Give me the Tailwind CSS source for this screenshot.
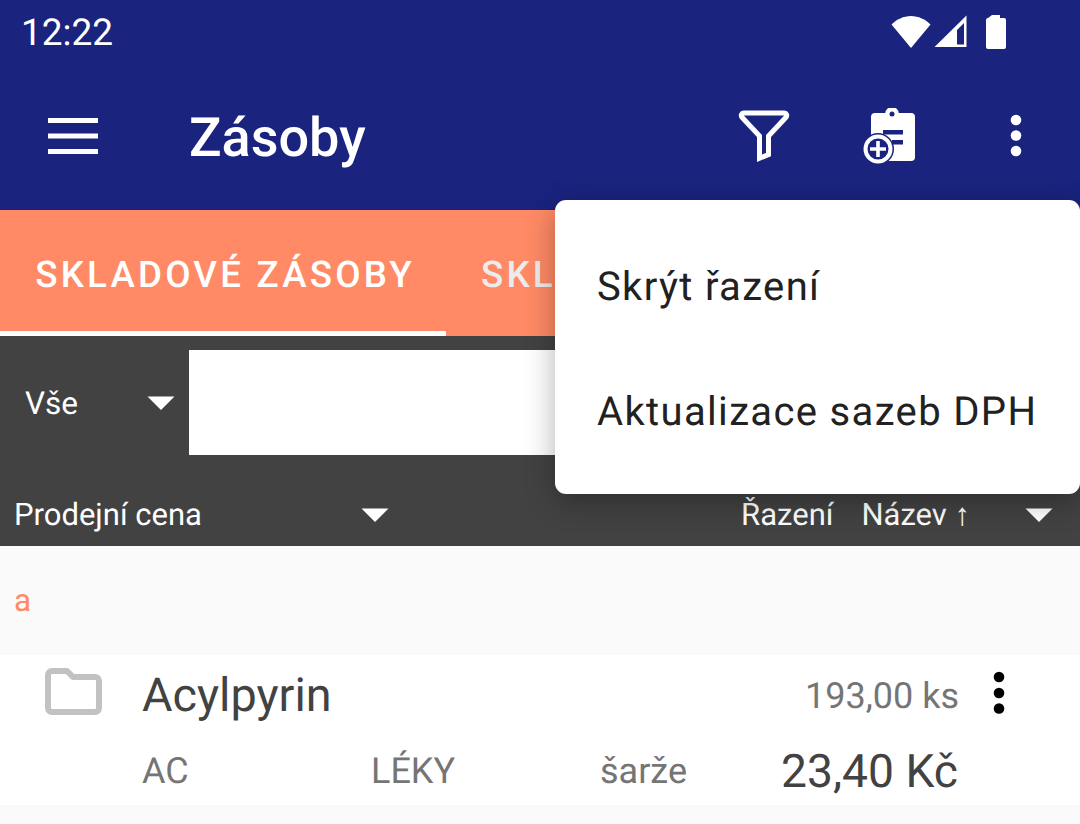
<!DOCTYPE html>
<html lang="cs">
<head>
  <meta charset="UTF-8">
  <meta name="viewport" content="width=device-width, initial-scale=1.0">
  <title>Zásoby</title>
  <script src="https://cdn.jsdelivr.net/npm/@tailwindcss/browser@4"></script>
</head>
<body class="relative w-[1080px] h-[824px] overflow-hidden bg-[#fafafa] font-['Roboto',sans-serif] [text-rendering:geometricPrecision]">

  <!-- Status bar + toolbar -->
  <header class="h-[210px] bg-[#1a237e] text-white">
    <div class="h-[66px] flex items-center justify-between pl-[21px] pr-[74px]">
      <span class="text-[37px] leading-none pt-[1px]">12:22</span>
      <div class="flex items-center pb-[3px]">
        <svg class="w-[40px] h-[34px]" viewBox="0 0 40 34" fill="#fff"><path d="M0.5 9.5C5.5 4.5 12.500 1 20 1s14.500 3.500 19.500 8.500L20 33z"/></svg>
        <svg class="ml-[3px] w-[33px] h-[33px]" viewBox="0 0 33 33" fill="#fff"><path fill-rule="evenodd" d="M32.500 0.500V32H0.500zM30 8l-7 7v14.500h7z"/></svg>
        <svg class="ml-[19px] w-[20px] h-[34px]" viewBox="0 0 20 34" fill="#fff"><path d="M6 0h8v3h4a2 2 0 0 1 2 2v27a2 2 0 0 1-2 2H2a2 2 0 0 1-2-2V5a2 2 0 0 1 2-2z"/></svg>
      </div>
    </div>
    <div class="h-[144px] flex items-center pb-[4px]">
      <svg class="ml-[48px] w-[50px] h-[36px] shrink-0" viewBox="0 0 50 36" fill="#fff"><rect y="0" width="50" height="5"/><rect y="15.500" width="50" height="5"/><rect y="31" width="50" height="5"/></svg>
      <h1 class="ml-[91px] pt-[6px] text-[54px] leading-none font-medium">Zásoby</h1>
      <svg class="ml-auto w-[52px] h-[52px] shrink-0" viewBox="0 0 52 52" fill="none" stroke="#fff" stroke-width="5"><path d="M6 3h40c2.500 0 3.500 2.500 2 4.300L30.500 26v18.500l-9 3.700V26L4 7.300C2.500 5.500 3.500 3 6 3z"/></svg>
      <svg class="ml-[73px] w-[54px] h-[56px] shrink-0" viewBox="0 0 54 56" fill="#fff">
        <rect x="8" y="5" width="44" height="48" rx="4"/>
        <circle cx="29" cy="6" r="7"/>
        <circle cx="29" cy="6" r="2.500" fill="#1a237e"/>
        <rect x="20" y="22" width="20" height="4.500" fill="#1a237e"/>
        <rect x="29" y="32" width="11" height="4.500" fill="#1a237e"/>
        <circle cx="15" cy="41" r="16" fill="#1a237e"/>
        <circle cx="15" cy="41" r="12.500" fill="none" stroke="#fff" stroke-width="4"/>
        <path d="M13.200 33h3.600v6.200H23v3.600h-6.200V49h-3.600v-6.200H7v-3.600h6.200z"/>
      </svg>
      <svg class="ml-[92px] mr-[57px] w-[14px] h-[44px] shrink-0" viewBox="0 0 14 44" fill="#fff"><circle cx="7" cy="6" r="5.300"/><circle cx="7" cy="21.500" r="5.300"/><circle cx="7" cy="37" r="5.300"/></svg>
    </div>
  </header>

  <!-- Tabs -->
  <nav class="h-[126px] bg-[#ff8a65] flex overflow-hidden">
    <div class="w-[446px] shrink-0 flex items-center justify-center border-b-[5px] border-white pt-[9px] pl-[4px]">
      <span class="text-[36.750px] font-medium tracking-[3.200px] text-white">SKLADOVÉ ZÁSOBY</span>
    </div>
    <div class="w-[109px] overflow-hidden flex items-center pl-[35px] pt-[4px]">
      <span class="text-[36.750px] font-medium tracking-[3.200px] text-[#ececec] whitespace-nowrap">SKL</span>
    </div>
  </nav>

  <!-- Filters -->
  <section class="h-[210px] bg-[#424242] text-white">
    <div class="h-[133px] flex items-start pt-[14px]">
      <div class="w-[189px] h-[105px] flex items-center pl-[25px] shrink-0">
        <span class="text-[31.500px] pt-[2px]">Vše</span>
        <svg class="ml-[69px] w-[28px] h-[14px] shrink-0" viewBox="0 0 28 14" fill="#fff"><path d="M0.500 0.500h27L14 14z"/></svg>
      </div>
      <div class="flex-1 h-[105px] bg-white"></div>
    </div>
    <div class="h-[77px] flex items-center pl-[14px] pt-[15px] text-[31px]">
      <span class="w-[347px]">Prodejní cena</span>
      <svg class="w-[28px] h-[14px]" viewBox="0 0 28 14" fill="#fff"><path d="M0.500 0.500h27L14 14z"/></svg>
      <span class="ml-auto">Řazení</span>
      <span class="ml-[28px]">Název ↑</span>
      <svg class="ml-[55px] mr-[27px] w-[28px] h-[14px]" viewBox="0 0 28 14" fill="#fff"><path d="M0.500 0.500h27L14 14z"/></svg>
    </div>
  </section>

  <!-- Section letter -->
  <div class="h-[109px] flex items-center pl-[14px]">
    <span class="text-[31.500px] text-[#ff8a65]">a</span>
  </div>

  <!-- Item -->
  <article class="h-[150px] bg-white">
    <div class="h-[82px] flex items-center">
      <svg class="ml-[45px] mb-[9px] w-[57px] h-[47px] shrink-0" viewBox="0 0 57 47" fill="none" stroke="#c2c2c2" stroke-width="6" stroke-linejoin="round"><path d="M7 3h15l6 6h22a4 4 0 0 1 4 4v27a4 4 0 0 1-4 4H7a4 4 0 0 1-4-4V7a4 4 0 0 1 4-4z"/></svg>
      <span class="ml-[40px] text-[46.750px] text-[#424242]">Acylpyrin</span>
      <span class="ml-auto text-[36px] text-[#757575]">193,00 ks</span>
      <svg class="ml-[34px] mr-[75px] mb-[6px] w-[12px] h-[44px] shrink-0" viewBox="0 0 12 44" fill="#000"><circle cx="6" cy="6" r="5.300"/><circle cx="6" cy="22" r="5.300"/><circle cx="6" cy="37.500" r="5.300"/></svg>
    </div>
    <div class="flex items-center h-[68px] pl-[142px] pr-[122px] text-[36px] text-[#757575]">
      <span class="w-[229px]">AC</span>
      <span class="w-[229px]">LÉKY</span>
      <span>šarže</span>
      <span class="ml-auto pt-[3px] text-[46.200px] text-[#424242]">23,40 Kč</span>
    </div>
  </article>

  <!-- Overflow menu -->
  <div class="absolute left-[555px] top-[200px] w-[525px] h-[294px] bg-white rounded-[11px] shadow-[0_8px_30px_rgba(0,0,0,0.3)] pt-[24px] text-[#212121] text-[40px] tracking-[1.350px]">
    <div class="h-[125px] flex items-center pl-[42px]">Skrýt řazení</div>
    <div class="h-[125px] flex items-center pl-[42px]">Aktualizace sazeb DPH</div>
  </div>

</body>
</html>
